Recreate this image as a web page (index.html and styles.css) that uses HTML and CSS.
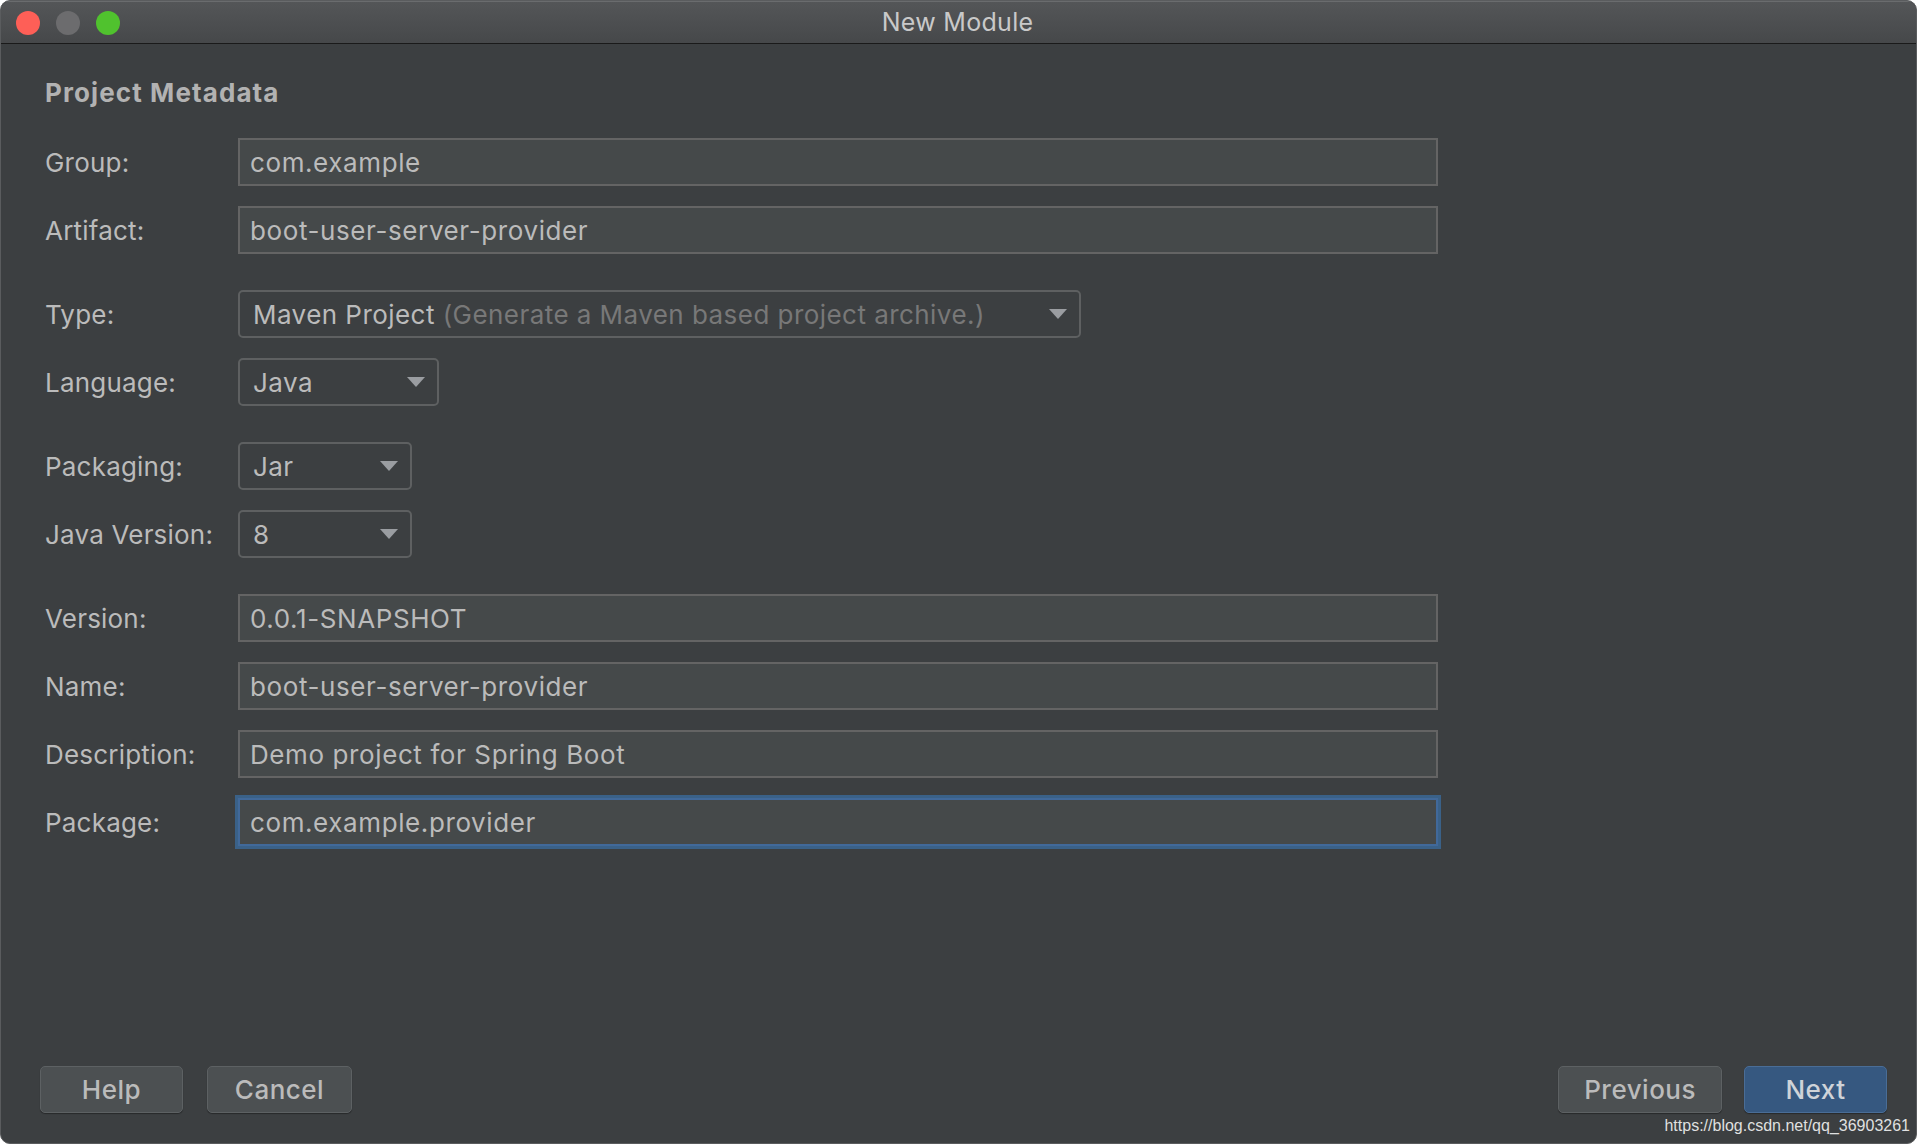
FILE: index.html
```html
<!DOCTYPE html>
<html lang="en">
<head>
<meta charset="utf-8">
<title>New Module</title>
<link rel="stylesheet" href="styles.css">
</head>
<body>
<div class="window">
  <div class="titlebar">
    <div class="lights">
      <span class="light red"></span>
      <span class="light grey"></span>
      <span class="light green"></span>
    </div>
    <div class="title">New Module</div>
    <div></div>
  </div>

  <div class="content">
    <h2 class="section-title">Project Metadata</h2>

    <div class="form">
      <div class="group">
        <div class="row"><span class="label">Group:</span><div class="field">com.example</div></div>
        <div class="row"><span class="label">Artifact:</span><div class="field">boot-user-server-provider</div></div>
      </div>

      <div class="group">
        <div class="row"><span class="label">Type:</span>
          <div class="combo combo-type"><span class="combo-text">Maven Project <span class="hint">(Generate a Maven based project archive.)</span></span>
            <svg class="arrow" width="18" height="10" viewBox="0 0 18 10"><path d="M0 0H18L9 10Z" fill="#9a9da1"/></svg></div>
        </div>
        <div class="row"><span class="label">Language:</span>
          <div class="combo combo-lang"><span class="combo-text">Java</span>
            <svg class="arrow" width="18" height="10" viewBox="0 0 18 10"><path d="M0 0H18L9 10Z" fill="#9a9da1"/></svg></div>
        </div>
      </div>

      <div class="group">
        <div class="row"><span class="label">Packaging:</span>
          <div class="combo combo-small"><span class="combo-text">Jar</span>
            <svg class="arrow" width="18" height="10" viewBox="0 0 18 10"><path d="M0 0H18L9 10Z" fill="#9a9da1"/></svg></div>
        </div>
        <div class="row"><span class="label">Java Version:</span>
          <div class="combo combo-small"><span class="combo-text">8</span>
            <svg class="arrow" width="18" height="10" viewBox="0 0 18 10"><path d="M0 0H18L9 10Z" fill="#9a9da1"/></svg></div>
        </div>
      </div>

      <div class="group">
        <div class="row"><span class="label">Version:</span><div class="field">0.0.1-SNAPSHOT</div></div>
        <div class="row"><span class="label">Name:</span><div class="field">boot-user-server-provider</div></div>
        <div class="row"><span class="label">Description:</span><div class="field">Demo project for Spring Boot</div></div>
        <div class="row"><span class="label">Package:</span><div class="field field-focus">com.example.provider</div></div>
      </div>
    </div>
  </div>

  <div class="footer">
    <div class="btn-group">
      <button class="btn">Help</button>
      <button class="btn btn-cancel">Cancel</button>
    </div>
    <div class="btn-group btn-group-right">
      <button class="btn">Previous</button>
      <button class="btn btn-primary">Next</button>
    </div>
  </div>

  <div class="watermark">https://blog.csdn.net/qq_36903261</div>
</div>
</body>
</html>
```

FILE: styles.css
```css
* { box-sizing: border-box; }

html, body {
  margin: 0;
  padding: 0;
  background: #ffffff;
}

body {
  width: 1918px;
  height: 1146px;
  overflow: hidden;
  font-family: "Inter", "Noto Sans", sans-serif;
}

.window {
  position: relative;
  width: 1917px;
  height: 1144px;
  background: #3c3f41;
  border: 1px solid #5a5c5e;
  border-radius: 10px;
  overflow: hidden;
  display: flex;
  flex-direction: column;
}

.titlebar {
  height: 42px;
  flex: none;
  display: grid;
  grid-template-columns: 1fr auto 1fr;
  align-items: center;
  background: linear-gradient(#545658, #46484a);
  border-bottom: 1px solid #1a1a1a;
  box-shadow: inset 0 1px 0 #6a6c6e;
  box-sizing: content-box;
}

.lights {
  display: flex;
  gap: 16px;
  padding-left: 15px;
  margin-top: 1px;
}

.light {
  width: 24px;
  height: 24px;
  border-radius: 50%;
  display: block;
}
.red { background: #fe5f57; }
.grey { background: #6c6c6e; }
.green { background: #50c22e; }

.title {
  color: #c9c9c9;
  font-size: 25px;
  letter-spacing: 0.3px;
  margin-left: -2px;
}

.content {
  flex: 1;
  padding: 33px 0 0 44px;
}

.section-title {
  margin: 0;
  font-size: 26px;
  line-height: 32px;
  font-weight: 700;
  color: #b2b2b2;
  letter-spacing: 1.1px;
}

.form {
  margin-top: 29px;
  display: flex;
  flex-direction: column;
  gap: 36px;
}

.group {
  display: flex;
  flex-direction: column;
  gap: 20px;
}

.row {
  display: grid;
  grid-template-columns: 193px auto;
  align-items: center;
  height: 48px;
}

.label {
  font-size: 26px;
  color: #bbbbbb;
  letter-spacing: 0.2px;
}

.field {
  width: 1200px;
  height: 48px;
  border: 2px solid #646464;
  background: #45494a;
  padding: 0 10px;
  display: flex;
  align-items: center;
  font-size: 26px;
  color: #bbbbbb;
  letter-spacing: 0.6px;
}

.field-focus {
  border-color: #41699a;
  box-shadow: 0 0 0 3px #3a6188;
}

.combo {
  height: 48px;
  border: 2px solid #5e6061;
  border-radius: 5px;
  display: flex;
  align-items: center;
  justify-content: space-between;
  padding: 0 12px 0 13px;
  font-size: 26px;
  color: #bbbbbb;
  letter-spacing: 0.45px;
}

.combo-type { width: 843px; }
.combo-lang { width: 201px; }
.combo-small { width: 174px; }

.hint { color: #787878; }

.arrow { display: block; flex: none; }

.footer {
  flex: none;
  display: flex;
  justify-content: space-between;
  align-items: flex-end;
  padding: 0 29px 30px 39px;
}

.btn-group {
  display: flex;
  gap: 24px;
}
.btn-group-right { gap: 22px; }

.btn {
  height: 47px;
  min-width: 143px;
  padding: 0 25px;
  border: 1px solid #5d6163;
  border-radius: 5px;
  background: #4c5052;
  color: #bbbbbb;
  font-family: "Inter", "Noto Sans", sans-serif;
  font-size: 26px;
  font-weight: 500;
  letter-spacing: 0.5px;
  box-shadow: 0 1px 1px rgba(0, 0, 0, 0.35);
}

.btn-cancel { min-width: 145px; }

.btn-primary {
  background: #365880;
  border-color: #4a6d96;
  color: #cfd3d8;
}

.watermark {
  position: absolute;
  right: 6px;
  bottom: 9px;
  font-family: "Liberation Sans", Arial, sans-serif;
  font-size: 16px;
  line-height: 16px;
  color: rgba(255, 255, 255, 0.85);
}
```
